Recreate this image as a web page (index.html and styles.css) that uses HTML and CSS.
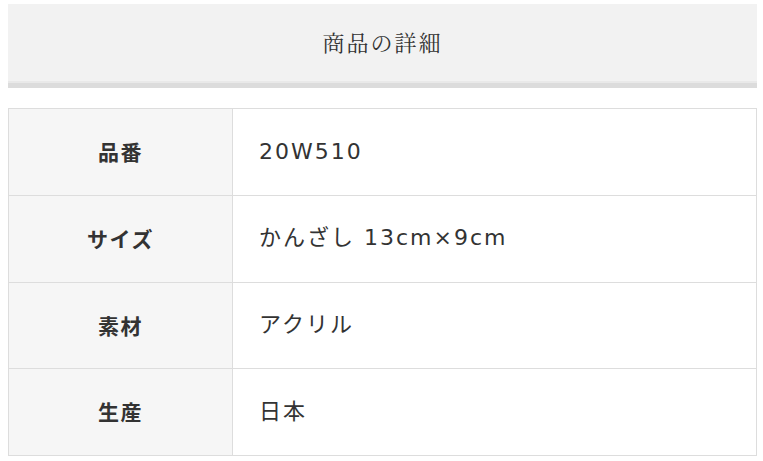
FILE: index.html
```html
<!DOCTYPE html>
<html lang="ja">
<head>
<meta charset="utf-8">
<link rel="stylesheet" href="styles.css">
</head>
<body>
<div class="page">
  <h2 class="heading">商品の詳細</h2>
  <table class="spec">
    <tr><th>品番</th><td>20W510</td></tr>
    <tr><th>サイズ</th><td>かんざし 13cm×9cm</td></tr>
    <tr><th>素材</th><td>アクリル</td></tr>
    <tr><th>生産</th><td>日本</td></tr>
  </table>
</div>
</body>
</html>
```
FILE: styles.css
```css
html, body {
  margin: 0;
  padding: 0;
  background: #fff;
}
.page {
  width: 749px;
  padding: 4px 0 0 8px;
  font-family: "Noto Sans CJK JP", "Noto Sans", sans-serif;
  color: #333;
}
.heading {
  margin: 0;
  height: 77px;
  display: flex;
  align-items: center;
  justify-content: center;
  background: #f2f2f2;
  border-bottom: 2px solid #e9e9e9;
  box-shadow: 0 5px 0 #dcdcdc;
  font-family: "Noto Serif CJK JP", "Noto Sans CJK JP", serif;
  font-weight: 400;
  font-size: 22px;
  line-height: 1.3;
  letter-spacing: 2px;
  color: #333;
}
.spec {
  margin-top: 25px;
  width: 749px;
  border-collapse: collapse;
  border: 1px solid #ddd;
}
.spec th, .spec td {
  height: 85.75px;
  border: 1px solid #ddd;
  padding: 0;
  line-height: 1.3;
}
.spec th {
  width: 223px;
  background: #f6f6f6;
  font-weight: 700;
  font-size: 21px;
  text-align: center;
  letter-spacing: 1.5px;
  color: #333;
}
.spec td {
  padding-left: 26px;
  font-family: "DejaVu Sans", "Noto Sans CJK JP", sans-serif;
  font-size: 22px;
  font-weight: 400;
  letter-spacing: 2px;
  color: #333;
  background: #fff;
}
```
